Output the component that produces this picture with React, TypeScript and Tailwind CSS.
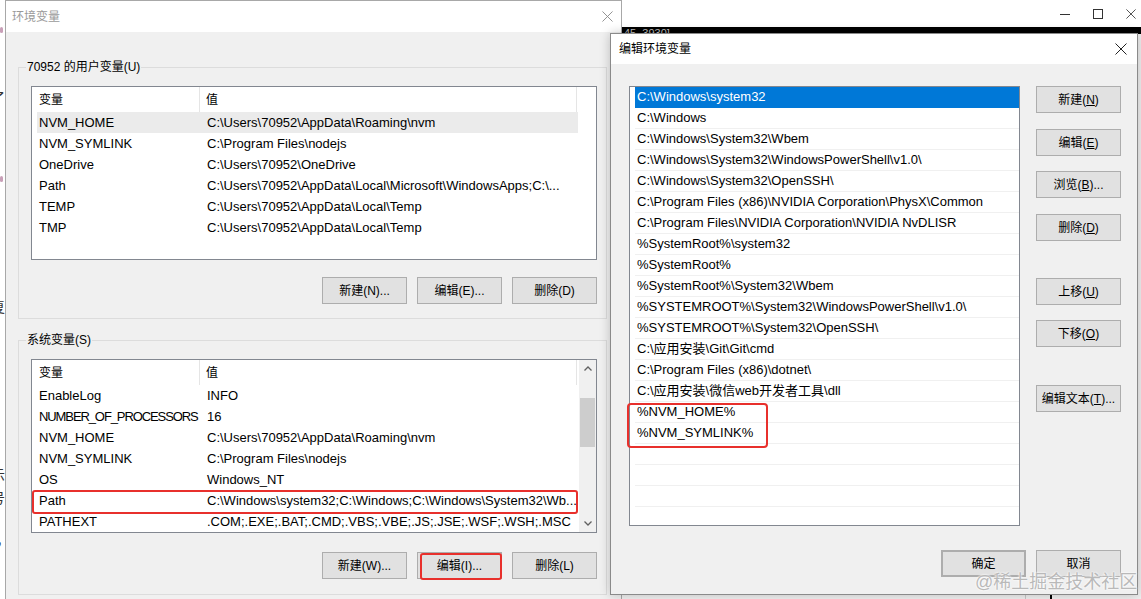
import type { ReactNode } from "react";

const FONT = "font-['Liberation_Sans','Noto_Sans_CJK_SC',sans-serif]";

const userVars: [string, string][] = [
  ["NVM_HOME", "C:\\Users\\70952\\AppData\\Roaming\\nvm"],
  ["NVM_SYMLINK", "C:\\Program Files\\nodejs"],
  ["OneDrive", "C:\\Users\\70952\\OneDrive"],
  ["Path", "C:\\Users\\70952\\AppData\\Local\\Microsoft\\WindowsApps;C:\\..."],
  ["TEMP", "C:\\Users\\70952\\AppData\\Local\\Temp"],
  ["TMP", "C:\\Users\\70952\\AppData\\Local\\Temp"],
];

const sysVars: [string, string][] = [
  ["EnableLog", "INFO"],
  ["NUMBER_OF_PROCESSORS", "16"],
  ["NVM_HOME", "C:\\Users\\70952\\AppData\\Roaming\\nvm"],
  ["NVM_SYMLINK", "C:\\Program Files\\nodejs"],
  ["OS", "Windows_NT"],
  ["Path", "C:\\Windows\\system32;C:\\Windows;C:\\Windows\\System32\\Wb..."],
  ["PATHEXT", ".COM;.EXE;.BAT;.CMD;.VBS;.VBE;.JS;.JSE;.WSF;.WSH;.MSC"],
];

const pathEntries = [
  "C:\\Windows\\system32",
  "C:\\Windows",
  "C:\\Windows\\System32\\Wbem",
  "C:\\Windows\\System32\\WindowsPowerShell\\v1.0\\",
  "C:\\Windows\\System32\\OpenSSH\\",
  "C:\\Program Files (x86)\\NVIDIA Corporation\\PhysX\\Common",
  "C:\\Program Files\\NVIDIA Corporation\\NVIDIA NvDLISR",
  "%SystemRoot%\\system32",
  "%SystemRoot%",
  "%SystemRoot%\\System32\\Wbem",
  "%SYSTEMROOT%\\System32\\WindowsPowerShell\\v1.0\\",
  "%SYSTEMROOT%\\System32\\OpenSSH\\",
  "C:\\应用安装\\Git\\Git\\cmd",
  "C:\\Program Files (x86)\\dotnet\\",
  "C:\\应用安装\\微信web开发者工具\\dll",
  "%NVM_HOME%",
  "%NVM_SYMLINK%",
  "",
  "",
  "",
  "",
];

function CloseGlyph({ className }: { className?: string }) {
  return (
    <svg viewBox="0 0 12 12" className={className} fill="none" stroke="currentColor" strokeWidth="1">
      <path d="M0.5 0.5L11.5 11.5M11.5 0.5L0.5 11.5" />
    </svg>
  );
}

function Btn({ children, className = "" }: { children: ReactNode; className?: string }) {
  return (
    <div
      className={`flex h-[27px] w-[85px] shrink-0 items-center justify-center border border-[#adadad] bg-[#e1e1e1] text-[12px] text-black ${className}`}
    >
      {children}
    </div>
  );
}

function Mn({ label, k, tail = "" }: { label: string; k: string; tail?: string }) {
  return (
    <span>
      {label}(<span className="underline">{k}</span>){tail}
    </span>
  );
}

function VarList({
  rows,
  scroll,
  selected,
  boxed,
  mt,
}: {
  rows: [string, string][];
  scroll?: boolean;
  selected?: number;
  boxed?: number;
  mt: string;
}) {
  return (
    <div className={`ml-[12px] flex h-[174px] w-[566px] overflow-hidden border border-[#828790] bg-white ${mt}`}>
      <div className={scroll ? "flex w-[547px] flex-col" : "flex flex-1 flex-col"}>
        <div className="flex h-[25px] shrink-0 text-[12px]">
          <div className="flex w-[168px] items-center border-r border-[#e5e5e5] pl-[7px]">变量</div>
          <div className="flex w-[377px] items-center border-r border-[#e5e5e5] pl-[6px]">值</div>
        </div>
        {rows.map(([name, value], i) => (
          <div
            key={name}
            className={`relative ml-[5px] flex h-[21px] w-[541px] shrink-0 items-center whitespace-nowrap text-[13px] text-black ${
              i === selected ? "bg-[#ebebeb]" : ""
            }`}
          >
            {/* long names are squeezed so they still fit the column, as in the real dialog */}
            <div className={`w-[163px] shrink-0 pl-[2px] ${name.length > 16 ? "tracking-[-1.1px]" : "overflow-hidden"}`}>
              {name}
            </div>
            <div className="flex-1 overflow-hidden pl-[7px]">{value}</div>
            {i === boxed && (
              <span className="absolute -left-[5px] top-0 -bottom-[3px] right-0 rounded-[3px] border-2 border-[#e8302c]" />
            )}
          </div>
        ))}
      </div>
      {scroll && (
        <div className="flex w-[17px] flex-col bg-[#f0f0f0]">
          <div className="flex h-[17px] items-center justify-center">
            <svg viewBox="0 0 8 5" className="h-[5px] w-[8px]" fill="none" stroke="#606060" strokeWidth="1.3">
              <path d="M0.5 4.5L4 1L7.5 4.5" />
            </svg>
          </div>
          <div className="mx-[1px] mt-[21px] h-[49px] bg-[#cdcdcd]" />
          <div className="flex-1" />
          <div className="flex h-[17px] items-center justify-center">
            <svg viewBox="0 0 8 5" className="h-[5px] w-[8px]" fill="none" stroke="#606060" strokeWidth="1.3">
              <path d="M0.5 0.5L4 4L7.5 0.5" />
            </svg>
          </div>
        </div>
      )}
    </div>
  );
}

function GroupBox({
  title,
  children,
  buttons,
  btnMt,
  pb,
}: {
  title: string;
  children: ReactNode;
  buttons: ReactNode;
  btnMt: string;
  pb: string;
}) {
  return (
    <fieldset className={`w-[589px] border border-[#dcdcdc] ${pb}`}>
      <legend className="ml-[7px] px-[1px] text-[12px] leading-[18px] text-black">{title}</legend>
      {children}
      <div className={`ml-[12px] flex w-[566px] justify-end gap-[10px] ${btnMt}`}>{buttons}</div>
    </fieldset>
  );
}

function EnvWindow() {
  return (
    <div className="absolute left-[5px] top-0 flex h-[620px] w-[617px] flex-col border border-[#a8a8a8] bg-[#f0f0f0]">
      <div className="flex h-[31px] shrink-0 items-center justify-between bg-white pl-[6px] pr-[8px]">
        <span className="text-[12px] text-[#9a9a9a]">环境变量</span>
        <CloseGlyph className="h-[11px] w-[11px] text-[#8a8a8a]" />
      </div>
      <div className="flex flex-col gap-[12px] pl-[12px] pt-[26px]">
        <GroupBox
          title="70952 的用户变量(U)"
          btnMt="mt-[17px]"
          pb="pb-[14px]"
          buttons={
            <>
              <Btn>新建(N)...</Btn>
              <Btn>编辑(E)...</Btn>
              <Btn>删除(D)</Btn>
            </>
          }
        >
          <VarList rows={userVars} selected={0} mt="mt-[10px]" />
        </GroupBox>
        <GroupBox
          title="系统变量(S)"
          btnMt="mt-[19px]"
          pb="pb-[15px]"
          buttons={
            <>
              <Btn>新建(W)...</Btn>
              <div className="relative">
                <Btn>编辑(I)...</Btn>
                <span className="absolute -bottom-[1px] left-[3px] right-0 top-[1px] rounded-[3px] border-2 border-[#e8302c]" />
              </div>
              <Btn>删除(L)</Btn>
            </>
          }
        >
          <VarList rows={sysVars} scroll boxed={5} mt="mt-[10px]" />
        </GroupBox>
      </div>
    </div>
  );
}

function BackWindow() {
  return (
    <div className="absolute left-[621px] top-0 flex h-[599px] w-[520px] flex-col border-l border-[#a8a8a8] bg-[#f0f0f0]">
      <div className="flex h-[27px] shrink-0 items-center justify-end gap-[23px] bg-white pr-[5px] text-[#333]">
        <svg viewBox="0 0 10 10" className="h-[10px] w-[10px]" fill="none" stroke="currentColor" strokeWidth="1">
          <path d="M0 5.5H10" />
        </svg>
        <svg viewBox="0 0 10 10" className="h-[10px] w-[10px]" fill="none" stroke="currentColor" strokeWidth="1">
          <rect x="0.5" y="0.5" width="9" height="9" />
        </svg>
        <CloseGlyph className="h-[10px] w-[10px]" />
      </div>
      <div className="h-[7px] shrink-0 overflow-hidden bg-black pl-[2px] text-[11px] leading-[13px] text-[#bdbdbd]">
        45_3930]
      </div>
      <div className="flex-1" />
      <div className="absolute bottom-0 left-[403px] h-[5px] w-[1px] bg-[#c8c8c8]" />
      <div className="absolute bottom-0 left-[428px] h-[5px] w-[2px] bg-black" />
    </div>
  );
}

function EditDialog() {
  return (
    <div className="absolute left-[610px] top-[33px] flex h-[562px] w-[528px] flex-col border border-[#8a8a8a] bg-[#f0f0f0] shadow-[0_0_10px_rgba(0,0,0,0.22)]">
      <div className="flex h-[30px] shrink-0 items-center justify-between bg-white pl-[8px] pr-[10px]">
        <span className="text-[12px] text-black">编辑环境变量</span>
        <CloseGlyph className="h-[12px] w-[12px] text-[#222]" />
      </div>
      <div className="flex flex-1 flex-col pl-[18px] pr-[16px] pt-[22px]">
        <div className="flex gap-[16px]">
          <div className="relative h-[440px] w-[391px] shrink-0">
            <div className="h-full w-full overflow-hidden border border-[#828790] bg-white">
              {pathEntries.map((p, i) => (
                <div
                  key={i}
                  className={`ml-[5px] flex h-[21px] items-center whitespace-nowrap border-b pl-[2px] text-[13px] ${
                    i === 0 ? "border-[#0078d7] bg-[#0078d7] text-white" : "border-[#f0f0f0] text-black"
                  }`}
                >
                  {p}
                </div>
              ))}
            </div>
            <span className="absolute -left-[2px] top-[317px] h-[45px] w-[141px] rounded-[4px] border-2 border-[#e8302c]" />
          </div>
          <div className="flex flex-col">
            <Btn><Mn label="新建" k="N" /></Btn>
            <Btn className="mt-[16px]"><Mn label="编辑" k="E" /></Btn>
            <Btn className="mt-[15px]"><Mn label="浏览" k="B" tail="..." /></Btn>
            <Btn className="mt-[16px]"><Mn label="删除" k="D" /></Btn>
            <Btn className="mt-[37px]"><Mn label="上移" k="U" /></Btn>
            <Btn className="mt-[15px]"><Mn label="下移" k="O" /></Btn>
            <Btn className="mt-[38px]"><Mn label="编辑文本" k="T" tail="..." /></Btn>
          </div>
        </div>
        <div className="mt-[24px] flex justify-end gap-[10px]">
          <Btn className="border-2 border-[#0078d7]">确定</Btn>
          <Btn>取消</Btn>
        </div>
      </div>
    </div>
  );
}

export default function App() {
  return (
    <div className={`relative h-[599px] w-[1141px] overflow-hidden bg-white text-black ${FONT}`}>
      <div className="absolute left-[-9px] top-[88px] text-[14px] text-[#333]">了</div>
      <div className="absolute left-[-9px] top-[297px] text-[14px] text-[#333]">复</div>
      <div className="absolute left-[-9px] top-[465px] text-[14px] text-[#333]">示</div>
      <div className="absolute left-[-9px] top-[488px] text-[14px] text-[#333]">号</div>
      <div className="absolute left-[-4px] top-[530px] text-[14px] text-[#333]">，</div>
      <div className="absolute left-[0px] top-[27px] h-[6px] w-[3px] rounded-full bg-[#c9a0b8]" />
      <div className="absolute left-[0px] top-[176px] h-[6px] w-[3px] rounded-full bg-[#c9a0b8]" />
      <BackWindow />
      <EnvWindow />
      <EditDialog />
      <div className="pointer-events-none absolute left-[975px] top-[569px] text-[18px] leading-[26px] text-[#b9b9b9] [text-shadow:0_0_2px_#fff,0_0_2px_#fff]">
        @稀土掘金技术社区
      </div>
    </div>
  );
}
